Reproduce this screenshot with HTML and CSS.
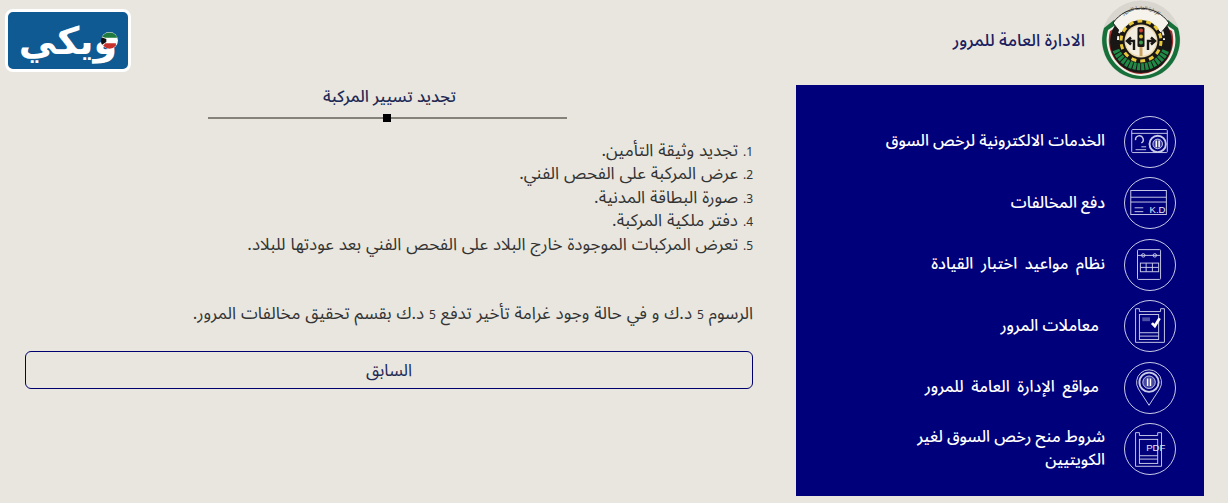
FILE: index.html
```html
<!DOCTYPE html>
<html lang="ar" dir="rtl">
<head>
<meta charset="utf-8">
<title>تجديد تسيير المركبة</title>
<link rel="stylesheet" href="styles.css">
</head>
<body>
<header class="top">
  <div class="brand">
    <svg class="emblem" viewBox="0 0 80 80" aria-hidden="true">
      <circle cx="40" cy="40" r="39.500" fill="#d8d6cf"/>
      <path d="M40 79A39 39 0 0 1 3 28L13 20L40 40L67 20L77 28A39 39 0 0 1 40 79Z" fill="#17703a"/>
      <path d="M40 76A36 36 0 0 1 7 30L16 24L40 40L64 24L73 30A36 36 0 0 1 40 76Z" fill="#f1efe6"/>
      <path d="M40 74A34 34 0 0 1 9 31L18 26L40 40L62 26L71 31A34 34 0 0 1 40 74Z" fill="#a5312f"/>
      <circle cx="40" cy="42" r="31" fill="#191715"/>
      <path d="M12 23A34 34 0 0 1 68 23L60 33A26 26 0 0 0 20 33Z" fill="#f5f3ec" stroke="#222" stroke-width="1"/>
      <path id="emblem-arc" d="M15 23A30 30 0 0 1 65 23" fill="none"/>
      <text class="emblem-text"><textPath href="#emblem-arc" startOffset="50%" text-anchor="middle">الإدارة العامة للمرور</textPath></text>
      <path d="M15 50A27 27 0 0 0 65 50" fill="none" stroke="#1f8a45" stroke-width="7" stroke-dasharray="3 1"/>
      <path d="M17 40A23 23 0 0 1 63 40" fill="none" stroke="#f5f3ec" stroke-width="2" stroke-dasharray="4 3"/>
      <circle cx="40" cy="41" r="21" fill="#191715"/>
      <circle cx="40" cy="41" r="20" fill="none" stroke="#e7c83a" stroke-width="3" stroke-dasharray="5 4"/>
      <circle cx="40" cy="41" r="16.500" fill="#ecd9ae"/>
      <circle cx="40" cy="41" r="15" fill="#f3eee0"/>
      <rect x="36.500" y="27" width="7" height="20" rx="1.500" fill="#191715"/>
      <circle cx="40" cy="30.500" r="2" fill="#c8402f"/>
      <circle cx="40" cy="36.500" r="2" fill="#e7c83a"/>
      <circle cx="40" cy="42.500" r="2" fill="#3a9a4d"/>
      <rect x="38.500" y="47" width="3" height="9" fill="#c9a262"/>
      <path d="M33 50V41H27M30 37.500L26 41L30 44.500M47 50V41H53M50 37.500L54 41L50 44.500" fill="none" stroke="#191715" stroke-width="2.400"/>
    </svg>
    <h1 class="brand-name">الادارة العامة للمرور</h1>
  </div>
  <div class="wiki-logo">
    <span class="wiki-text">ويكي</span>
    <svg class="wiki-flag" viewBox="0 0 16 16" aria-hidden="true">
      <circle cx="8" cy="8" r="8" fill="#fff"/>
      <path d="M1 4.500A8 8 0 0 1 15 4.500V5.500H4Z" fill="#1f7a3d"/>
      <path d="M2 13A8 8 0 0 0 14 13V10.500H4Z" fill="#c8322d"/>
      <path d="M0.500 5L5 6.500V9.500L1 12A8 8 0 0 1 0.500 5Z" fill="#111"/>
    </svg>
  </div>
</header>

<div class="layout">
  <nav class="side">
    <a class="side-item">
      <span class="ring">
        <svg viewBox="0 0 52 52" aria-hidden="true"><g fill="none" stroke="currentColor" stroke-width="1"><rect x="7" y="13" width="37" height="24" rx="1"/><path d="M7 17H44"/><path d="M11 24A4 4 0 1 1 17 27" stroke-width="1.500"/><path d="M17 31H22M11 34H22"/><circle cx="34" cy="28" r="8.500" stroke-width="2"/><circle cx="34" cy="28" r="5" fill="currentColor" fill-opacity=".3"/><path d="M32.500 24.500V31.500M35.500 24.500V31.500" stroke-width="1.500" stroke="#fff"/></g></svg>
      </span>
      <span class="side-label">الخدمات الالكترونية لرخص السوق</span>
    </a>
    <a class="side-item">
      <span class="ring">
        <svg viewBox="0 0 52 52" aria-hidden="true"><g fill="none" stroke="currentColor" stroke-width="1"><rect x="6" y="13" width="37" height="25"/><path d="M6 20H43M6 25H43M10 31H19M10 35H19"/></g><text x="25.500" y="36" class="ico-text">K.D</text></svg>
      </span>
      <span class="side-label">دفع المخالفات</span>
    </a>
    <a class="side-item is-spaced">
      <span class="ring">
        <svg viewBox="0 0 52 52" aria-hidden="true"><g fill="none" stroke="currentColor" stroke-width="1"><rect x="13" y="10" width="24" height="31" rx="1"/><path d="M13 16H37"/><circle cx="19" cy="16" r="1.800"/><circle cx="31" cy="16" r="1.800"/><rect x="16" y="24" width="19" height="9"/><path d="M22 24V33M28.500 24V33M16 28.500H35"/></g></svg>
      </span>
      <span class="side-label">نظام مواعيد اختبار القيادة</span>
    </a>
    <a class="side-item is-inset">
      <span class="ring">
        <svg viewBox="0 0 52 52" aria-hidden="true"><g fill="none" stroke="currentColor" stroke-width="1"><path d="M11 8H15V11H37V8H41V43H11Z"/><rect x="15" y="14" width="20" height="26"/><path d="M15 33H35M15 36.500H35"/></g><path d="M18 17H26V21H18Z" fill="currentColor" opacity=".4"/><path d="M28 23L31 26L36 18" fill="none" stroke="#fff" stroke-width="2.800"/></svg>
      </span>
      <span class="side-label">معاملات المرور</span>
    </a>
    <a class="side-item is-inset is-spaced">
      <span class="ring">
        <svg viewBox="0 0 52 52" aria-hidden="true"><g fill="none" stroke="currentColor"><path d="M25 44L14 27A13 13 0 1 1 36 27Z" stroke-width="1"/><circle cx="25" cy="20" r="10" stroke-width="2"/><circle cx="25" cy="20" r="6.500" fill="currentColor" fill-opacity=".35" stroke-width="1"/><path d="M23.500 16V24M26.500 16V24" stroke-width="1.500" stroke="#fff"/></g></svg>
      </span>
      <span class="side-label">مواقع الإدارة العامة للمرور</span>
    </a>
    <a class="side-item">
      <span class="ring">
        <svg viewBox="0 0 52 52" aria-hidden="true"><g fill="none" stroke="currentColor" stroke-width="1"><path d="M11 9H15V12H34V9H38V44H11Z"/><rect x="15" y="16" width="19" height="25"/><path d="M15 33H34M15 36.500H34"/></g><text x="22" y="28" class="ico-text">PDF</text></svg>
      </span>
      <span class="side-label">شروط منح رخص السوق لغير الكويتيين</span>
    </a>
  </nav>

  <main class="content">
    <div class="title-block">
      <h2 class="title">تجديد تسيير المركبة</h2>
      <div class="rule"><span class="rule-mark"></span></div>
    </div>
    <ol class="reqs">
      <li><span class="num">1.</span> تجديد وثيقة التأمين.</li>
      <li><span class="num">2.</span> عرض المركبة على الفحص الفني.</li>
      <li><span class="num">3.</span> صورة البطاقة المدنية.</li>
      <li><span class="num">4.</span> دفتر ملكية المركبة.</li>
      <li><span class="num">5.</span> تعرض المركبات الموجودة خارج البلاد على الفحص الفني بعد عودتها للبلاد.</li>
    </ol>
    <p class="fees">الرسوم <span class="num">5</span> د.ك و في حالة وجود غرامة تأخير تدفع <span class="num">5</span> د.ك بقسم تحقيق مخالفات المرور.</p>
    <a class="back">السابق</a>
  </main>
</div>
</body>
</html>
```

FILE: styles.css
```css
* { box-sizing: border-box; }
html, body { margin: 0; height: 100%; }
body {
  background: #e8e6df;
  font-family: "Noto Sans Arabic", "Noto Sans", "DejaVu Sans", sans-serif;
  color: #333;
  overflow: hidden;
}
.top {
  height: 85px;
  display: flex;
  justify-content: space-between;
  align-items: flex-start;
  padding: 0 47px 0 5px;
}
.brand { display: flex; align-items: center; gap: 16px; }
.emblem { width: 80px; height: 80px; }
.emblem-text { font-size: 5px; fill: #333; }
.brand-name { margin: 0; font-size: 17.200px; font-weight: 500; color: #1a2060; }
.wiki-logo {
  margin-top: 9px;
  position: relative;
  width: 126px;
  height: 63px;
  background: #0f5a93;
  border: 3px solid #fff;
  border-radius: 8px;
  display: flex;
  align-items: center;
  justify-content: center;
}
.wiki-text { color: #fff; font-size: 38px; font-weight: 700; line-height: 1; font-family: "DejaVu Sans", sans-serif; }
.wiki-flag { position: absolute; right: 10px; top: 20px; width: 17px; height: 17px; }
.layout {
  display: flex;
  gap: 43px;
  padding: 0 24px 0 25px;
}
.side {
  width: 408px;
  height: 411px;
  flex: none;
  background: #00007a;
  padding: 31px 28px 0 10px;
  display: flex;
  flex-direction: column;
  gap: 10.5px;
}
.side-item {
  display: flex;
  align-items: center;
  gap: 19px;
  height: 51px;
  color: #fff;
}
.ring {
  width: 52px;
  height: 52px;
  flex: none;
  border: 1px solid #c9cbe8;
  border-radius: 50%;
  color: #c9cbe8;
  display: flex;
}
.ring svg { width: 100%; height: 100%; }
.ico-text { font-family: "Liberation Sans", sans-serif; font-size: 10px; fill: #e4e5f5; direction: ltr; }
.side-label { font-size: 16px; line-height: 23px; font-weight: 500; max-width: 232px; }
.is-inset .side-label { padding-right: 6px; }
.is-spaced .side-label { word-spacing: 3.500px; }
.num { font-size: 12px; line-height: 0; }
.content { flex: 1; }
.title-block {
  width: 359px;
  margin: 0 auto;
  text-align: center;
  position: relative;
  left: -2px;
}
.title { margin: 0; padding-left: 5px; font-size: 16.500px; font-weight: 500; line-height: 24px; color: #1f2a55; }
.rule { position: relative; height: 2px; margin-top: 8px; background: #85827a; }
.rule-mark {
  position: absolute;
  top: -3px;
  left: 50%;
  margin-left: -4px;
  width: 8px;
  height: 8px;
  background: #000;
}
.reqs { list-style: none; margin: 21px 0 0; padding: 0; font-size: 17px; line-height: 23.400px; word-spacing: .5px; }
.reqs li { height: 23.400px; }
.fees { margin: 45px 0 0; font-size: 17px; line-height: 24px; word-spacing: .5px; }
.back {
  display: block;
  margin-top: 25px;
  height: 38px;
  border: 1px solid #00006e;
  border-radius: 6px;
  text-align: center;
  font-size: 17px;
  line-height: 38px;
  color: #1f2a55;
}
```
